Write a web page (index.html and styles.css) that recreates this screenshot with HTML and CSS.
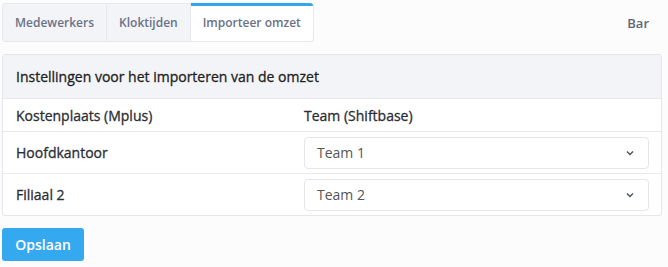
FILE: index.html
```html
<!DOCTYPE html>
<html lang="nl">
<head>
<meta charset="utf-8">
<title>Importeer omzet</title>
<link rel="stylesheet" href="styles.css">
</head>
<body>
<div class="page">
  <div class="topbar">
    <nav class="tabs">
      <a class="tab">Medewerkers</a>
      <a class="tab">Kloktijden</a>
      <a class="tab active">Importeer omzet</a>
    </nav>
    <span class="brand">Bar</span>
  </div>

  <section class="panel">
    <header class="panel-head">Instellingen voor het importeren van de omzet</header>
    <div class="grid">
      <div class="cell head">Kostenplaats (Mplus)</div>
      <div class="cell head c2">Team (Shiftbase)</div>

      <div class="cell label row">Hoofdkantoor</div>
      <div class="cell c2 row">
        <div class="select"><span>Team 1</span>
          <svg class="chev" width="8" height="6" viewBox="0 0 8 6"><path d="M1 1.5 L4 4.5 L7 1.5" fill="none" stroke="#4a5061" stroke-width="1.4"/></svg>
        </div>
      </div>

      <div class="cell label row">Filiaal 2</div>
      <div class="cell c2 row">
        <div class="select"><span>Team 2</span>
          <svg class="chev" width="8" height="6" viewBox="0 0 8 6"><path d="M1 1.5 L4 4.5 L7 1.5" fill="none" stroke="#4a5061" stroke-width="1.4"/></svg>
        </div>
      </div>
    </div>
  </section>

  <button class="btn">Opslaan</button>
</div>
</body>
</html>
```
FILE: styles.css
```css
* { box-sizing: border-box; }
html, body { margin: 0; padding: 0; }
body {
  background: #fcfcfd;
  font-family: "Open Sans", "Noto Sans", sans-serif;
  color: #333;
}
.page {
  padding: 3px 6px 0 2px;
}
.topbar {
  display: flex;
  justify-content: space-between;
  align-items: center;
}
.tabs {
  display: flex;
  border: 1px solid #e6e8ee;
  border-radius: 3px;
  background: #f3f4f8;
  height: 39px;
}
.tab {
  display: flex;
  align-items: center;
  padding: 0 12px;
  font-size: 12px;
  font-weight: 600;
  color: #6b7287;
  border-right: 1px solid #e6e8ee;
  text-decoration: none;
}
.tab:last-child { border-right: none; }
.tab.active {
  background: #fff;
  border-top: 3px solid #35a6ee;
  padding-bottom: 3px;
  margin-top: -1px;
  border-radius: 0 3px 3px 0;
}
.brand {
  font-size: 13px;
  font-weight: 600;
  color: #5f6679;
  margin-right: 13px;
}
.panel {
  margin-top: 12px;
  border: 1px solid #e4e6ec;
  border-radius: 3px;
  background: #fff;
  width: 660px;
}
.panel-head {
  background: #f3f4f8;
  height: 44px;
  display: flex;
  align-items: center;
  padding-left: 13px;
  font-size: 14px;
  font-weight: 400;
  color: #222;
  -webkit-text-stroke: 0.3px #222;
  border-bottom: 1px solid #e6e8ee;
}
.grid {
  display: grid;
  grid-template-columns: 288px 1fr;
}
.cell {
  display: flex;
  align-items: center;
  padding: 0 13px;
  font-size: 14px;
  font-weight: 400;
  color: #2a2d33;
  -webkit-text-stroke: 0.3px #2a2d33;
}
.cell.c2 { padding: 0 12px 0 13px; }
.cell.head { height: 32px; }
.cell.row {
  height: 42px;
  border-top: 1px solid #e8e9ee;
}
.select {
  flex: 1;
  height: 32px;
  border: 1px solid #e4e6ec;
  border-radius: 4px;
  display: flex;
  align-items: center;
  justify-content: space-between;
  padding: 0 12px 0 12px;
  font-size: 14px;
  font-weight: 400;
  color: #555;
  -webkit-text-stroke: 0;
  background: #fff;
}
.chev { display: block; margin-right: 2px; }
.btn {
  margin-top: 12px;
  height: 33px;
  width: 82px;
  border: none;
  border-radius: 3px;
  background: #35a9ef;
  color: #fff;
  font-family: inherit;
  font-size: 14px;
  font-weight: 600;
  padding: 0;
}
```
